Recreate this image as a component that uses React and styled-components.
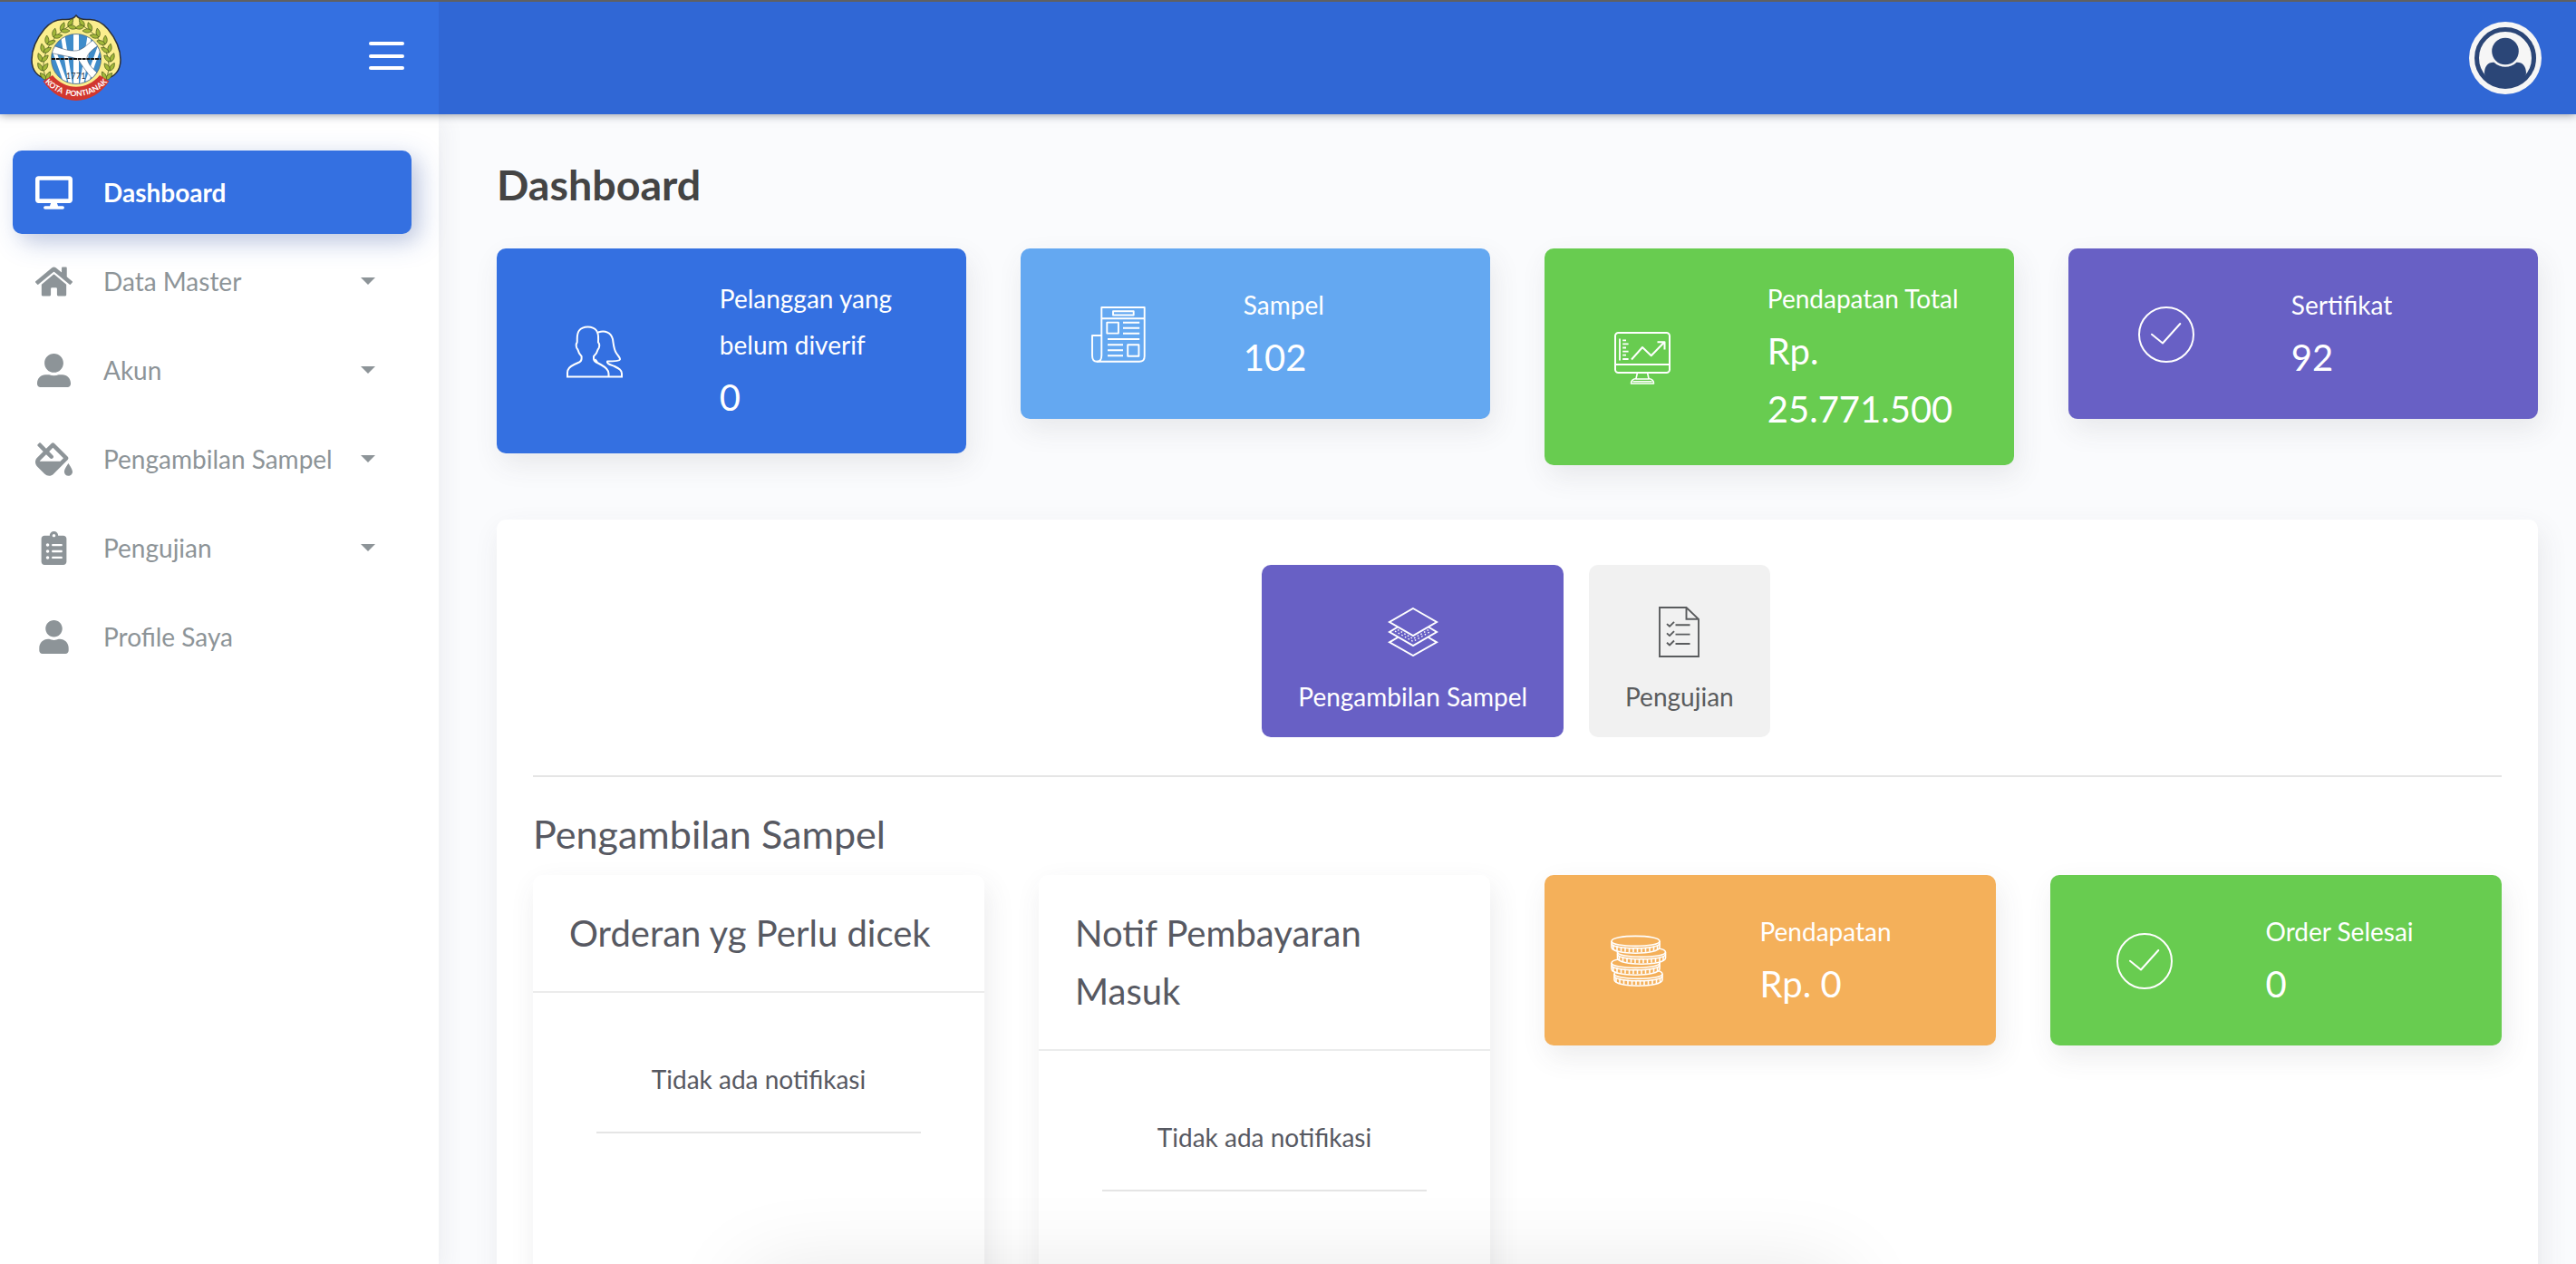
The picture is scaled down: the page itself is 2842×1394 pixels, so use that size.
import React from "react";
import styled, { createGlobalStyle } from "styled-components";
import { FaDesktop, FaHome, FaUserAlt, FaUser, FaFillDrip, FaClipboardList } from "react-icons/fa";

const colors = {
  primary: "#3470e1",
  info: "#64a8f1",
  success: "#68cc50",
  secondary: "#6860c5",
  warning: "#f4b05a",
};

const GlobalStyle = createGlobalStyle`
  *, *::before, *::after { box-sizing: border-box; }
  html, body { margin: 0; padding: 0; overflow: hidden; }
  body {
    background: #fafbfd;
    color: #575962;
    font-family: Lato, "Liberation Sans", sans-serif;
    font-size: 28px;
    line-height: 1.8;
  }
  h1, h2, h3, p { margin: 0; font-weight: 400; }
  button { font: inherit; border: 0; background: none; padding: 0; margin: 0; }
  svg { display: block; }
`;

const Page = styled.div`
  position: relative;
  display: flex;
  flex-direction: column;
  height: 1394px;
  overflow: hidden;
  border-top: 2px solid #5f6062;
`;

const Header = styled.header`
  position: relative;
  z-index: 2;
  display: flex;
  flex: none;
  height: 124px;
  box-shadow: 0 0 10px rgba(18, 23, 39, 0.5);
`;

const LogoHeader = styled.div`
  display: flex;
  align-items: flex-start;
  justify-content: space-between;
  width: 484px;
  padding: 14px 38px 0 34px;
  background: ${colors.primary};
`;

const MenuToggle = styled.button`
  display: flex;
  flex-direction: column;
  gap: 9.5px;
  width: 39px;
  margin-top: 30px;
`;

const ToggleBar = styled.span`
  height: 4px;
  border-radius: 2px;
  background: #fff;
`;

const Navbar = styled.div`
  display: flex;
  flex: 1;
  align-items: flex-start;
  justify-content: flex-end;
  padding: 22px 38px 0;
  background: #3067d5;
`;

const Body = styled.div`
  display: flex;
  flex: 1;
  min-height: 0;
`;

const Sidebar = styled.nav`
  display: flex;
  flex: none;
  flex-direction: column;
  gap: 6px;
  width: 484px;
  padding: 40px 30px 0 14px;
  background: #fff;
  box-shadow: 8px 8px 20px rgba(69, 65, 78, 0.06);
`;

const NavItem = styled.a`
  display: flex;
  align-items: center;
  height: 92px;
  padding: 0 40px 0 20px;
  border-radius: 10px;
  color: ${(p) => (p.$active ? "#fff" : "#8d9498")};
  font-weight: ${(p) => (p.$active ? 700 : 400)};
  background: ${(p) => (p.$active ? colors.primary : "transparent")};
  box-shadow: ${(p) =>
    p.$active ? "8px 8px 20px rgba(0,0,0,0.06), 8px 8px 30px rgba(52,90,190,0.28)" : "none"};
`;

const NavIcon = styled.span`
  display: flex;
  flex: none;
  justify-content: center;
  width: 50px;
  margin-right: 30px;

  & > svg {
    flex: none;
    width: 41px;
    height: 37px;
  }
`;

const NavLabel = styled.span`
  flex: 1;
  white-space: nowrap;
`;

const Caret = styled.span`
  border: 8px solid transparent;
  border-top-color: currentColor;
  border-bottom-width: 0;
`;

const Main = styled.main`
  flex: 1;
  padding: 54px 42px 0 64px;
`;

const PageTitle = styled.h1`
  margin-bottom: 48px;
  color: #444;
  font-size: 46.6px;
  font-weight: 700;
  line-height: 46px;
`;

const CardGrid = styled.div`
  display: grid;
  grid-template-columns: repeat(4, 1fr);
  gap: 60px;
  align-items: start;
`;

const StatCard = styled.section`
  display: grid;
  grid-template-columns: 5fr 7fr;
  align-items: center;
  min-height: 188px;
  padding: 30px 0;
  border-radius: 10px;
  color: #fff;
  background: ${(p) => p.$color};
  box-shadow: 4px 12px 30px rgba(69, 65, 78, 0.1);
`;

const StatIcon = styled.div`
  display: flex;
  justify-content: center;
  padding-top: 2px;
`;

const StatText = styled.div`
  padding: 0 30px;
`;

const StatLabel = styled.p`
  line-height: 51px;
`;

const StatValue = styled.p`
  font-size: 40px;
  line-height: 64px;
`;

const Panel = styled.section`
  height: 1000px;
  margin-top: 60px;
  padding: 50px 40px;
  border-radius: 10px;
  background: #fff;
  box-shadow: 4px 12px 30px rgba(69, 65, 78, 0.1);
`;

const Tabs = styled.div`
  display: flex;
  justify-content: center;
  gap: 28px;
  padding-right: 3px;
`;

const Tab = styled.button`
  display: flex;
  flex-direction: column;
  align-items: center;
  height: 190px;
  padding: 46px 40px 0;
  border-radius: 10px;
  color: ${(p) => (p.$active ? "#fff" : "#5a5c5e")};
  background: ${(p) => (p.$active ? colors.secondary : "#f1f1f1")};
`;

const TabIcon = styled.span`
  display: flex;
  align-items: center;
  height: 56px;
  margin-bottom: 18px;
`;

const Divider = styled.hr`
  height: 2px;
  margin: 42px 0 34px;
  border: 0;
  background: #e5e5e5;
`;

const SectionTitle = styled.h2`
  margin-bottom: 18px;
  font-size: 43.1px;
  line-height: 56px;
`;

const NoticeCard = styled.section`
  height: 600px;
  border-radius: 10px;
  background: #fff;
  box-shadow: 4px 12px 30px rgba(69, 65, 78, 0.1);
`;

const NoticeHeader = styled.h3`
  padding: 32px 40px;
  border-bottom: 2px solid #ebecec;
  font-size: 40px;
  line-height: 64px;
`;

const NoticeBody = styled.div`
  padding: 70px 70px 0;
  text-align: center;
`;

const NoticeText = styled.p`
  padding-bottom: 32.6px;
  border-bottom: 2px solid #e5e5e5;
`;

const BottomShade = styled.div`
  position: absolute;
  z-index: 3;
  top: 1400px;
  left: 825px;
  width: 1210px;
  height: 100px;
  border-radius: 20px;
  box-shadow: 0 0 95px rgba(0, 0, 0, 0.1);
`;

function Leaf({ x, y, a }) {
  return (
    <path
      d="M0 0C2.6-2.4 3-6 0-10C-3-6-2.6-2.4 0 0Z"
      transform={`translate(${x} ${y}) rotate(${a})`}
      fill="#a2b83a"
      stroke="#4a5a1c"
      strokeWidth=".7"
    />
  );
}

const leafStems = [
  [17, 72, -8], [13, 62, 2], [12, 52, 12], [14, 42, 22], [18, 33, 32], [25, 25, 44], [33, 18, 56], [41, 13, 68],
];

function CityLogo() {
  return (
    <svg width="100" height="96" viewBox="0 0 100 96">
      <path
        d="M50 1C53 5 58 6 64 5.500C72 5 79 9 85 16C94 27 99 40 99 50C99 62 92 69 84 70L50 84L16 70C8 69 1 62 1 50C1 40 6 27 15 16C21 9 28 5 36 5.500C42 6 47 5 50 1Z"
        fill="#fbee8e" stroke="#2c3038" strokeWidth="1.500"
      />
      {[0, 1].map((side) => (
        <g key={side} transform={side ? "translate(100 0) scale(-1 1)" : undefined}>
          <path d="M18 74C9 55 14 28 47 10" fill="none" stroke="#4a5a1c" strokeWidth=".8" />
          {leafStems.map(([x, y, a]) => (
            <g key={y}>
              <Leaf x={x} y={y} a={a - 34} />
              <Leaf x={x} y={y} a={a + 34} />
            </g>
          ))}
        </g>
      ))}
      <circle cx="50" cy="49" r="29.500" fill="#fbee8e" />
      <clipPath id="cityDisc"><circle cx="50" cy="49" r="27.500" /></clipPath>
      <g clipPath="url(#cityDisc)">
        <circle cx="50" cy="49" r="28" fill="#3f8cca" />
        <g stroke="#fff" fill="none">
          <path d="M50 20V78" strokeWidth="6" />
          <path d="M35 22L44 78M65 22L56 78" strokeWidth="4.500" />
          <path d="M25 38L38 74M77 32L62 74" strokeWidth="4" />
        </g>
        <path
          d="M22 33C34 38 46 42 54 39C61 36 66 29 72 26L78 32C70 37 64 41 62 47C62 53 67 59 73 64L68 71C62 64 56 56 52 49C42 46 32 45 21 42Z"
          fill="#fff" stroke="#44566a" strokeWidth=".6"
        />
      </g>
      <circle cx="50" cy="49" r="27.500" fill="none" stroke="#47617a" strokeWidth=".8" />
      <path d="M23 49H77" stroke="#111" strokeWidth="2" strokeDasharray="4 .8" />
      <text x="50" y="71" textAnchor="middle" fontFamily="Lato, sans-serif" fontSize="8.500" letterSpacing=".6" fill="#26303a">1771</text>
      <path d="M24 67C38 84 62 84 76 67L86.500 73.500C68 102 32 102 13.500 73.500Z" fill="#d1372f" />
      <path id="ribbonLine" d="M12 70A46 46 0 0 0 88 70" fill="none" />
      <text fontFamily="Lato, sans-serif" fontSize="8.600" fontWeight="700" fill="#fff">
        <textPath href="#ribbonLine" startOffset="50%" textAnchor="middle">KOTA&#160; PONTIANAK</textPath>
      </text>
    </svg>
  );
}

function Avatar() {
  return (
    <svg width="80" height="80" viewBox="0 0 80 80">
      <circle cx="40" cy="40" r="40" fill="#f6f6f6" />
      <circle cx="40" cy="40" r="31.500" fill="none" stroke="#2b4677" strokeWidth="5" />
      <circle cx="40" cy="32.500" r="14.800" fill="#2b4677" />
      <path d="M17 57C17 49 21 44.500 27.500 44.800C34.500 51.500 45.500 51.500 52.500 44.800C59 44.500 63 49 63 57C60 66 50 72 40 72C30 72 20 66 17 57Z" fill="#2b4677" />
    </svg>
  );
}

function LineIcon({ width, height, strokeWidth = 2, children }) {
  return (
    <svg
      width={width} height={height} viewBox={`0 0 ${width} ${height}`}
      fill="none" stroke="currentColor" strokeWidth={strokeWidth} strokeLinejoin="round"
    >
      {children}
    </svg>
  );
}

const UsersIcon = () => (
  <LineIcon width={62} height={58}>
    <path d="M1 56.500V52C1 47.500 4 45 8.500 43L14 40.500C16 39.500 16.600 38.500 16.600 36.500V34C14 31.500 13 29 12.400 26.500C10.500 24.500 10 20.500 11.700 18.500C12 13 11 9.500 14 5.500C18 0 29 0 33 5.500C36 9.500 35 13 35 18.500C37 20.500 36.500 24.500 34.600 26.500C34 29 33 31.500 30 34V36.500C30 38.500 31 39.500 33 40.500L38.500 43.500C43 46 46.500 48.500 46.500 53V56.500" />
    <path d="M0 56.500H62" />
    <path d="M35 7.500C43 5 49 8 51 15C52 21 52 26 55 30.500C57 33.500 59.500 36 59 37.500C58.500 39 53 39.500 45 39.500C44 42 48 43 53 45C58 47.500 61 49 61 53V56.500" />
    <path d="M31 37.500L33.500 40.500" strokeWidth="3" />
  </LineIcon>
);

const NewsIcon = () => (
  <LineIcon width={60} height={62} strokeWidth={1.900}>
    <path d="M11.300 54V1H58.700V55C58.700 58.500 56.500 60.800 53 60.800H6.200" />
    <path d="M11.300 32H1V54C1 58.500 3 60.800 6.200 60.800S11.300 58.500 11.300 54" />
    <path d="M11 13.200H59M24 5.300H46.700V9.500H24ZM17.300 17.600H29.900V29.600H17.300ZM40.200 42.200H52.400V54.800H40.200Z" />
    <path d="M35 17.700H53.200M35 23.700H53.200M35 29.700H53.200M18 36H53.200M18 42.200H35M18 48.300H35M18 54.300H35" />
  </LineIcon>
);

const MonitorIcon = () => (
  <LineIcon width={62} height={58}>
    <rect x="1" y="1" width="60" height="44" rx="3.500" />
    <path d="M1 36H61" />
    <path d="M6 7.500V31.500M9.200 9.300H13M9.200 13.300H15.600M9.200 17.500H13M9.200 21.700H15.600M9.200 25.700H13M9.200 30H15.600" strokeWidth="1.800" />
    <path d="M19 30.500L31 17L40.700 26.300L55 11.500M47.500 11.200H55.500V19.500" />
    <path d="M25.500 45L24 51.500C20.500 52 18.500 54 18.500 57H43.500C43.500 54 41.500 52 38 51.500L36.500 45M23.500 52H38.500M20.500 54.700H41.500" strokeWidth="1.600" />
  </LineIcon>
);

const CheckIcon = () => (
  <LineIcon width={62} height={62}>
    <circle cx="31" cy="31" r="30" />
    <path d="M15 30.700L27 40.500L46.300 19" strokeLinecap="round" />
  </LineIcon>
);

function Coin({ x, y }) {
  const ridges = [3, 7, 11.500, 16, 20.500, 25, 29.500, 34, 38.500, 43, 47.500, 51.500];
  return (
    <g transform={`translate(${x} ${y})`}>
      <path d="M1 6.500V13C1 22 54 22 54 13V6.500C54 -1 1 -1 1 6.500Z" fill={colors.warning} />
      <path d="M1 6.500C1 13.700 54 13.700 54 6.500M1 9C1 16 54 16 54 9" />
      {ridges.map((r) => {
        const drop = 5.300 * Math.sqrt(1 - ((r - 27.500) / 27.500) ** 2);
        return <path key={r} d={`M${r} ${8.500 + drop}V${13.500 + drop}`} />;
      })}
    </g>
  );
}

const CoinsIcon = () => (
  <LineIcon width={62} height={58} strokeWidth={1.600}>
    <Coin x={3} y={36.500} />
    <Coin x={0} y={24.500} />
    <Coin x={6.500} y={12.500} />
    <Coin x={0} y={0.500} />
  </LineIcon>
);

const LayersIcon = () => (
  <LineIcon width={56} height={54}>
    <path d="M28 1L54 16L28 31L2 16Z" strokeLinejoin="miter" />
    <path d="M11 21.500L2 27L28 42L54 27L45 21.500M11 33L2 38.300L28 53L54 38.300L45 33" strokeLinejoin="miter" />
    <path d="M8 26L28 37.500L48 26M11 24.500L28 34.500L45 24.500" strokeWidth="1.400" strokeDasharray="1.600 2.600" />
  </LineIcon>
);

const ChecklistIcon = () => (
  <LineIcon width={45} height={56} strokeWidth={1.900}>
    <path d="M1 1H30.500L44 13.800V55H1ZM30.500 1V13.800H44" strokeLinejoin="miter" />
    {[20.300, 30.600, 41].map((y) => (
      <path key={y} d={`M9 ${y - 1.200}L12 ${y + 1.500}L17 ${y - 3.500}M18.500 ${y}H34.500`} />
    ))}
  </LineIcon>
);

const navItems = [
  { label: "Dashboard", icon: FaDesktop, active: true },
  { label: "Data Master", icon: FaHome, children: true },
  { label: "Akun", icon: FaUserAlt, children: true },
  { label: "Pengambilan Sampel", icon: FaFillDrip, children: true },
  { label: "Pengujian", icon: FaClipboardList, children: true },
  { label: "Profile Saya", icon: FaUser },
];

const stats = [
  { label: "Pelanggan yang belum diverif", value: "0", color: colors.primary, icon: UsersIcon },
  { label: "Sampel", value: "102", color: colors.info, icon: NewsIcon },
  { label: "Pendapatan Total", value: "Rp. 25.771.500", color: colors.success, icon: MonitorIcon },
  { label: "Sertifikat", value: "92", color: colors.secondary, icon: CheckIcon },
];

const samplingStats = [
  { label: "Pendapatan", value: "Rp. 0", color: colors.warning, icon: CoinsIcon },
  { label: "Order Selesai", value: "0", color: colors.success, icon: CheckIcon },
];

const notices = ["Orderan yg Perlu dicek", "Notif Pembayaran Masuk"];

function Stat({ label, value, color, icon: Icon }) {
  return (
    <StatCard $color={color}>
      <StatIcon><Icon /></StatIcon>
      <StatText>
        <StatLabel>{label}</StatLabel>
        <StatValue>{value}</StatValue>
      </StatText>
    </StatCard>
  );
}

export default function App() {
  return (
    <Page>
      <GlobalStyle />
      <Header>
        <LogoHeader>
          <CityLogo />
          <MenuToggle aria-label="Menu">
            <ToggleBar />
            <ToggleBar />
            <ToggleBar />
          </MenuToggle>
        </LogoHeader>
        <Navbar>
          <Avatar />
        </Navbar>
      </Header>
      <Body>
        <Sidebar>
          {navItems.map(({ label, icon: Icon, active, children }) => (
            <NavItem key={label} $active={active}>
              <NavIcon><Icon /></NavIcon>
              <NavLabel>{label}</NavLabel>
              {children && <Caret />}
            </NavItem>
          ))}
        </Sidebar>
        <Main>
          <PageTitle>Dashboard</PageTitle>
          <CardGrid>
            {stats.map((s) => <Stat key={s.label} {...s} />)}
          </CardGrid>
          <Panel>
            <Tabs>
              <Tab $active>
                <TabIcon><LayersIcon /></TabIcon>
                Pengambilan Sampel
              </Tab>
              <Tab>
                <TabIcon><ChecklistIcon /></TabIcon>
                Pengujian
              </Tab>
            </Tabs>
            <Divider />
            <SectionTitle>Pengambilan Sampel</SectionTitle>
            <CardGrid>
              {notices.map((title) => (
                <NoticeCard key={title}>
                  <NoticeHeader>{title}</NoticeHeader>
                  <NoticeBody>
                    <NoticeText>Tidak ada notifikasi</NoticeText>
                  </NoticeBody>
                </NoticeCard>
              ))}
              {samplingStats.map((s) => <Stat key={s.label} {...s} />)}
            </CardGrid>
          </Panel>
        </Main>
      </Body>
      <BottomShade />
    </Page>
  );
}
